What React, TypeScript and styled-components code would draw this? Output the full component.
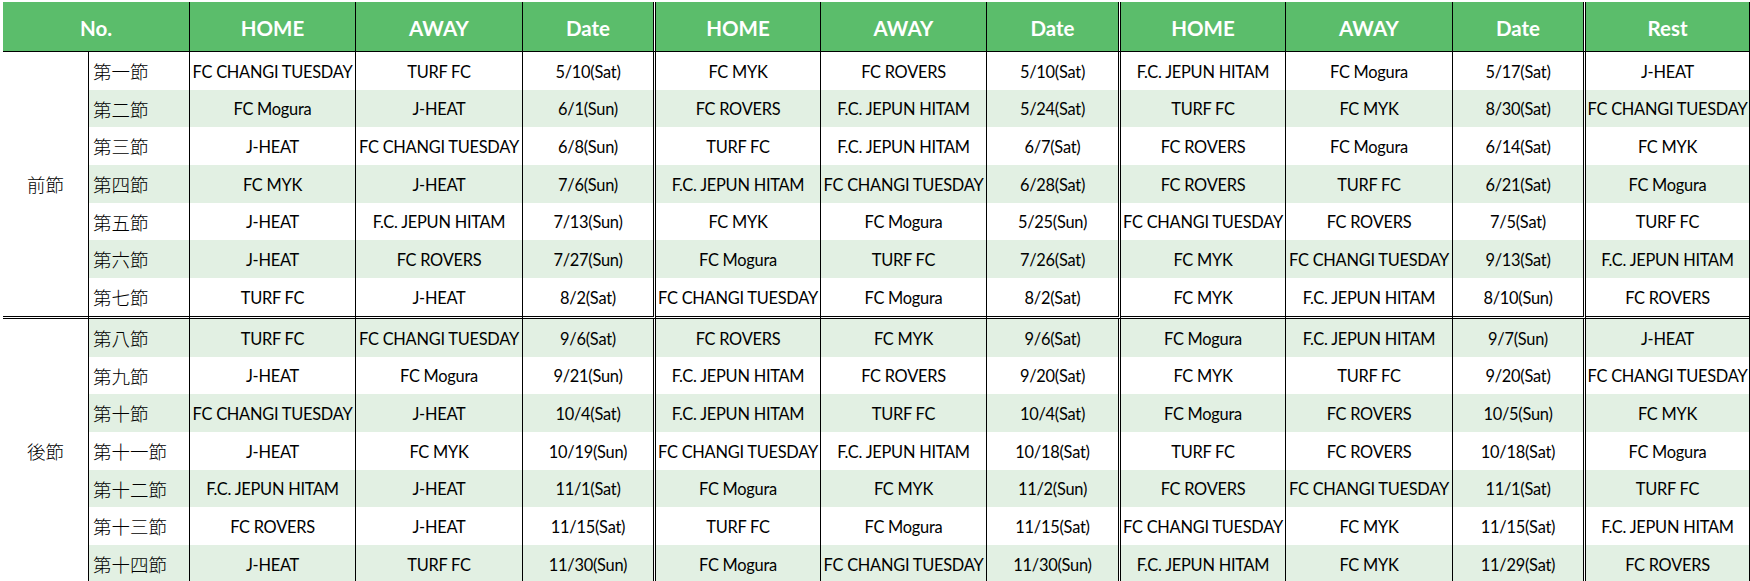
import React from "react";
import styled, { createGlobalStyle, css } from "styled-components";

const GlobalStyle = createGlobalStyle`
  html, body {
    margin: 0;
    padding: 0;
    background: #ffffff;
    overflow: hidden;
  }
  body {
    font-family: Lato, "Noto Sans CJK JP", sans-serif;
    color: #000000;
  }
`;

type Divider = "single" | "double";

const COLUMN_WIDTHS = [86, 101, 166, 167, 133, 165, 166, 134, 165, 167, 133, 164];
const ROW_HEIGHTS = [38, 37, 38, 38, 37, 38, 41, 38, 37, 38, 38, 37, 38, 38];
const DIVIDERS: Divider[] = [
  "single",
  "single",
  "single",
  "single",
  "double",
  "single",
  "single",
  "double",
  "single",
  "single",
  "double",
  "single",
];

const HEADER_GREEN = "#5bbd6b";
const BAND_GREEN = "#e2f0e3";

const Sheet = styled.div`
  display: grid;
  grid-template-columns: ${COLUMN_WIDTHS.map((w) => `${w}px`).join(" ")};
  grid-template-rows: 50px ${ROW_HEIGHTS.map((h) => `${h}px`).join(" ")};
  padding: 2px 0 0 3px;
  width: max-content;
`;

const rightBorder = (d: Divider) =>
  d === "double"
    ? css`
        border-right: 3px double #000;
      `
    : css`
        border-right: 1px solid #000;
      `;

const HeaderCell = styled.div<{ $divider: Divider; $span?: number }>`
  box-sizing: border-box;
  display: flex;
  align-items: center;
  justify-content: center;
  padding-top: 3px;
  background: ${HEADER_GREEN};
  background-clip: padding-box;
  color: #ffffff;
  font-family: Lato, sans-serif;
  font-weight: 700;
  font-size: 20.5px;
  border-bottom: 1px solid #000;
  ${(p) => rightBorder(p.$divider)}
  grid-column: span ${(p) => p.$span ?? 1};
  white-space: nowrap;
  overflow: hidden;
`;

const SectionCell = styled.div<{ $rows: number; $closing: boolean }>`
  box-sizing: border-box;
  grid-row: span ${(p) => p.$rows};
  display: flex;
  align-items: center;
  justify-content: center;
  font-family: "Noto Sans CJK JP", sans-serif;
  font-size: 18.5px;
  font-weight: 300;
  border-right: 1px solid #000;
  ${(p) =>
    p.$closing &&
    css`
      border-bottom: 3px double #000;
    `}
`;

const Cell = styled.div<{
  $band: boolean;
  $divider: Divider;
  $closing: boolean;
  $label?: boolean;
}>`
  box-sizing: border-box;
  display: flex;
  align-items: center;
  justify-content: ${(p) => (p.$label ? "flex-start" : "center")};
  padding: ${(p) => (p.$label ? "0 0 0 4px" : "0")};
  background: ${(p) => (p.$band ? BAND_GREEN : "#ffffff")};
  background-clip: padding-box;
  font-family: ${(p) =>
    p.$label ? `"Noto Sans CJK JP", sans-serif` : `Lato, sans-serif`};
  font-size: ${(p) => (p.$label ? "18.5px" : "16.4px")};
  font-weight: ${(p) => (p.$label ? 300 : 400)};
  letter-spacing: ${(p) => (p.$label ? "0" : "-0.25px")};
  ${(p) => rightBorder(p.$divider)}
  ${(p) =>
    p.$closing &&
    css`
      border-bottom: 3px double #000;
    `}
  white-space: nowrap;
  overflow: hidden;
`;

const HEADERS = [
  "HOME",
  "AWAY",
  "Date",
  "HOME",
  "AWAY",
  "Date",
  "HOME",
  "AWAY",
  "Date",
  "Rest",
];

const ROUNDS: string[][] = [
  ["第一節", "FC CHANGI TUESDAY", "TURF FC", "5/10(Sat)", "FC MYK", "FC ROVERS", "5/10(Sat)", "F.C. JEPUN HITAM", "FC Mogura", "5/17(Sat)", "J-HEAT"],
  ["第二節", "FC Mogura", "J-HEAT", "6/1(Sun)", "FC ROVERS", "F.C. JEPUN HITAM", "5/24(Sat)", "TURF FC", "FC MYK", "8/30(Sat)", "FC CHANGI TUESDAY"],
  ["第三節", "J-HEAT", "FC CHANGI TUESDAY", "6/8(Sun)", "TURF FC", "F.C. JEPUN HITAM", "6/7(Sat)", "FC ROVERS", "FC Mogura", "6/14(Sat)", "FC MYK"],
  ["第四節", "FC MYK", "J-HEAT", "7/6(Sun)", "F.C. JEPUN HITAM", "FC CHANGI TUESDAY", "6/28(Sat)", "FC ROVERS", "TURF FC", "6/21(Sat)", "FC Mogura"],
  ["第五節", "J-HEAT", "F.C. JEPUN HITAM", "7/13(Sun)", "FC MYK", "FC Mogura", "5/25(Sun)", "FC CHANGI TUESDAY", "FC ROVERS", "7/5(Sat)", "TURF FC"],
  ["第六節", "J-HEAT", "FC ROVERS", "7/27(Sun)", "FC Mogura", "TURF FC", "7/26(Sat)", "FC MYK", "FC CHANGI TUESDAY", "9/13(Sat)", "F.C. JEPUN HITAM"],
  ["第七節", "TURF FC", "J-HEAT", "8/2(Sat)", "FC CHANGI TUESDAY", "FC Mogura", "8/2(Sat)", "FC MYK", "F.C. JEPUN HITAM", "8/10(Sun)", "FC ROVERS"],
  ["第八節", "TURF FC", "FC CHANGI TUESDAY", "9/6(Sat)", "FC ROVERS", "FC MYK", "9/6(Sat)", "FC Mogura", "F.C. JEPUN HITAM", "9/7(Sun)", "J-HEAT"],
  ["第九節", "J-HEAT", "FC Mogura", "9/21(Sun)", "F.C. JEPUN HITAM", "FC ROVERS", "9/20(Sat)", "FC MYK", "TURF FC", "9/20(Sat)", "FC CHANGI TUESDAY"],
  ["第十節", "FC CHANGI TUESDAY", "J-HEAT", "10/4(Sat)", "F.C. JEPUN HITAM", "TURF FC", "10/4(Sat)", "FC Mogura", "FC ROVERS", "10/5(Sun)", "FC MYK"],
  ["第十一節", "J-HEAT", "FC MYK", "10/19(Sun)", "FC CHANGI TUESDAY", "F.C. JEPUN HITAM", "10/18(Sat)", "TURF FC", "FC ROVERS", "10/18(Sat)", "FC Mogura"],
  ["第十二節", "F.C. JEPUN HITAM", "J-HEAT", "11/1(Sat)", "FC Mogura", "FC MYK", "11/2(Sun)", "FC ROVERS", "FC CHANGI TUESDAY", "11/1(Sat)", "TURF FC"],
  ["第十三節", "FC ROVERS", "J-HEAT", "11/15(Sat)", "TURF FC", "FC Mogura", "11/15(Sat)", "FC CHANGI TUESDAY", "FC MYK", "11/15(Sat)", "F.C. JEPUN HITAM"],
  ["第十四節", "J-HEAT", "TURF FC", "11/30(Sun)", "FC Mogura", "FC CHANGI TUESDAY", "11/30(Sun)", "F.C. JEPUN HITAM", "FC MYK", "11/29(Sat)", "FC ROVERS"],
];

export default function App() {
  return (
    <>
      <GlobalStyle />
      <Sheet>
        <HeaderCell $divider="single" $span={2}>
          No.
        </HeaderCell>
        {HEADERS.map((h, i) => (
          <HeaderCell key={`h${i}`} $divider={DIVIDERS[i + 2]}>
            {h}
          </HeaderCell>
        ))}
        {ROUNDS.map((row, r) => {
          const closing = r === 6;
          return (
            <React.Fragment key={`r${r}`}>
              {r === 0 && (
                <SectionCell $rows={7} $closing>
                  前節
                </SectionCell>
              )}
              {r === 7 && (
                <SectionCell $rows={7} $closing={false}>
                  後節
                </SectionCell>
              )}
              {row.map((value, c) => (
                <Cell
                  key={`c${r}-${c}`}
                  $band={r % 2 === 1}
                  $divider={DIVIDERS[c + 1]}
                  $closing={closing}
                  $label={c === 0}
                >
                  {value}
                </Cell>
              ))}
            </React.Fragment>
          );
        })}
      </Sheet>
    </>
  );
}
